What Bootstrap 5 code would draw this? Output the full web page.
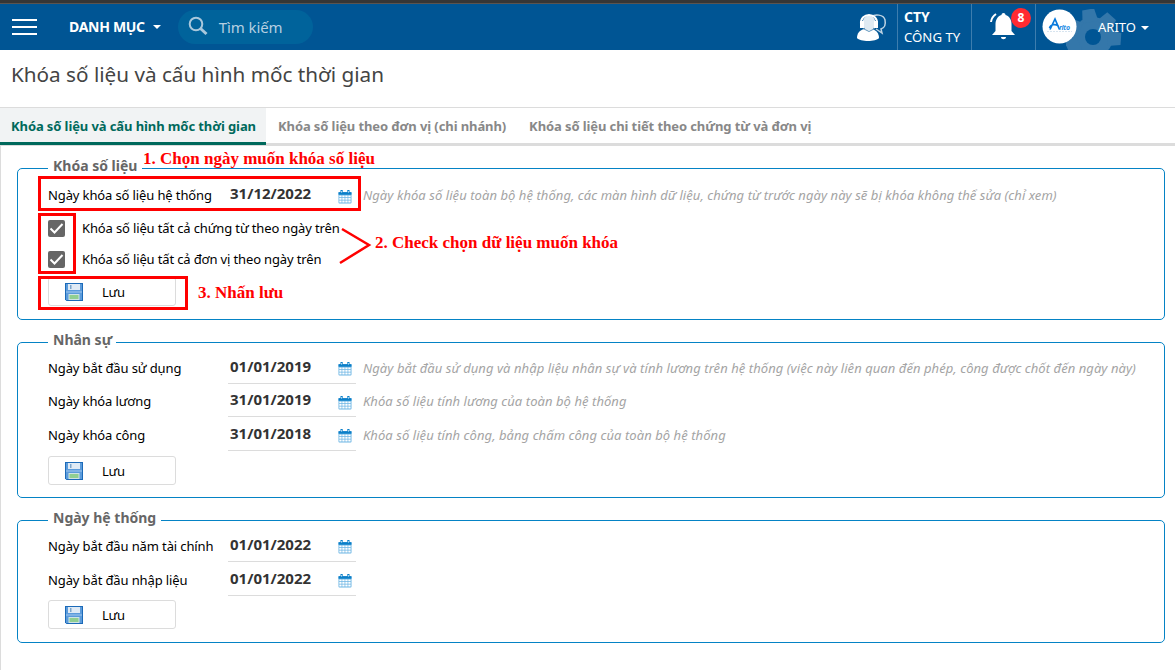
<!DOCTYPE html>
<html lang="vi">
<head>
<meta charset="utf-8">
<meta name="viewport" content="width=device-width, initial-scale=1">
<title>Khóa số liệu và cấu hình mốc thời gian</title>
<link rel="stylesheet" href="https://cdn.jsdelivr.net/npm/bootstrap@5.3.0/dist/css/bootstrap.min.css">
<style>
body{font-family:"Noto Sans","Open Sans",sans-serif;font-size:13px;line-height:18px;color:#000;height:670px;overflow:hidden;background:#fff}
.topbar{height:50px;background:#005594;border-top:3px solid #363636;color:#fff;box-shadow:inset 0 1px #5a5450}
.burger{width:25px;height:16px;border-top:2px solid #fff;border-bottom:2px solid #fff;margin-left:12px}
.burger i{display:block;height:2px;background:#fff;margin-top:5px}
.menu-name{font-weight:700;font-size:14px;letter-spacing:-.3px;margin-left:32px;padding-top:1px}
.caret{border:4px solid transparent;border-top-color:#fff;border-bottom:0}
.search{width:135px;height:34px;border-radius:17px;background:#00639b;color:#b5cfe1;font-size:15px;padding-left:10px;margin-left:17px}
.s-text{margin-left:10px;letter-spacing:-.1px}
.bar-cell{height:46px;border-left:1px solid #3d7dae;margin-top:1px}
.company{width:74px;font-size:14px;line-height:20px;padding:3px 0 0 6px}
.co{font-size:13.2px}
.bell{width:64px}
.count{left:39px;top:4px;width:20px;height:20px;border-radius:50%;background:#ff2a31;font-size:12px;line-height:20px;font-weight:700}
.account{width:140px;overflow:hidden}
.gear{left:30px;top:5px}
.user-name{left:62px;top:14px;font-size:13px}
.page-title{height:58px;border-bottom:1px solid #dcdcdc;font-size:20.7px;line-height:26px;color:#444;padding:11px 0 0 11px}
.tabs{height:38px;box-shadow:inset 0 -3px #dcdcdc;font-weight:700;color:#888;line-height:37px;letter-spacing:-.1px}
.tabs .on{width:266px;height:37px;background:#f1f3f4;color:#00695c;border-bottom:3px solid #00695c;padding-left:11px}
.t3{margin-left:23px}
.content-pane{border-left:1px solid #dcdcdc;height:524px;padding:14px 10px 0 16px}
fieldset.group{border:1px solid #0583c5;border-radius:5px;padding:0 0 0 30px;box-sizing:border-box}
.group legend{height:16px;line-height:11px;font-size:14px;font-weight:700;color:#666;padding-left:5px;white-space:nowrap}
.line{height:34px}
.line .cap{width:180px;white-space:nowrap;letter-spacing:-.12px;padding-top:1px}
.date{width:128px;border-bottom:1px solid #dcdcdc;font-weight:700;font-size:15px;color:#333;padding:0 4px 0 2px;height:100%}
.date span{margin-top:-2px}
.date svg{margin-top:5px}
.hint{font-style:italic;color:#a4a4a4;margin-left:7px;white-space:nowrap;letter-spacing:.065px;padding-top:1px}
.tick{width:17px;height:17px;border-radius:2px;background:#666}
.ck{margin-left:17px;letter-spacing:-.14px}
.save{width:128px;height:29px;border:1px solid #dcdcdc;border-radius:3px;background:#fff;padding:0 0 0 16px}
.save span{margin-left:19px;letter-spacing:-.3px}
.note{font:700 17px/20px "Liberation Serif",serif;color:#f00;white-space:nowrap}
.frame{border:3px solid #f00}
</style>
</head>
<body class="position-relative">
<svg width="0" height="0" class="position-absolute">
<symbol id="cal" viewBox="0 0 14 14"><rect x=".5" y="2" width="13" height="11.500" rx="1" fill="#6db5e4"/><path d="M.5 2.200h13v2.500H.5z" fill="#0b7fc8"/><path d="M2.500 0h2.200v3H2.500zM9.300 0h2.200v3H9.300z" fill="#0b7fc8"/><path d="M3.600 1v1.700M10.400 1v1.700" stroke="#e4f2fb" stroke-width=".8"/><path d="M1.300 5.500h2.300v1.700H1.300zM4.300 5.500h2.300v1.700H4.300zM7.300 5.500h2.300v1.700H7.300zM10.300 5.500h2.300v1.700h-2.300zM1.300 8h2.300v1.800H1.300zM4.300 8h2.300v1.800H4.300zM7.300 8h2.300v1.800H7.300zM10.300 8h2.300v1.800h-2.300zM1.300 10.600h2.300v1.800H1.300zM4.300 10.600h2.300v1.800H4.300zM7.300 10.600h2.300v1.800H7.300zM10.300 10.600h2.300v1.800h-2.300z" fill="#fff"/></symbol>
<symbol id="disk" viewBox="0 0 18 18"><path d="M0 0h18v18H1.500L0 16.500z" fill="#1c6ab8"/><path d="M1 1h16v16H1z" fill="#5b9bdb"/><path d="M3 1h12v6H3z" fill="#dfeaf5"/><path d="M5 2h1.500v4H5z" fill="#7ea6cc"/><path d="M1 8h16v2H1z" fill="#7fb2e5"/><path d="M3.500 11h11v6h-11z" fill="#cfe3e4"/><path d="M4.500 12h9v4h-9z" fill="#90cf91"/></symbol>
</svg>
<header class="topbar d-flex align-items-center">
 <div class="burger"><i></i></div>
 <div class="menu-name">DANH MỤC</div><span class="caret ms-2"></span>
 <div class="search d-flex align-items-center"><svg width="21" height="21" viewBox="0 0 21 21" fill="none" stroke="#a9c8dc"><circle cx="8" cy="8" r="6.300" stroke-width="2"/><path d="M12.500 12.500l6 5.500" stroke-width="3"/></svg><span class="s-text">Tìm kiếm</span></div>
 <svg class="ms-auto me-2" width="34" height="30" viewBox="0 0 34 30"><path d="M17 5c2-3 12-3 13 3 1 5-1 8-4 9l1 4-6-4" fill="none" stroke="#bdd3e3" stroke-width="1.500"/><path d="M2 26c0-5 3-8 7-9h8c4 1 7 4 7 9-3 4-19 4-22 0z" fill="#fff"/><ellipse cx="14" cy="11" rx="6.500" ry="7.500" fill="#dfeaf2"/><path d="M6 12c-1-12 17-12 16 0" fill="none" stroke="#fff" stroke-width="2"/><path d="M5 9h4v7H5zM19 9h4v7h-4z" fill="#fff"/><path d="M8 16.500l6 3 6-3" fill="none" stroke="#5f95bd"/></svg>
 <div class="bar-cell company"><b>CTY</b><br><span class="co">CÔNG TY</span></div>
 <div class="bar-cell bell position-relative"><svg class="position-absolute" style="left:17px;top:7px" width="28" height="30" viewBox="0 0 28 30"><path d="M14.500 2c1.500 0 2 1 2 2 4 1 6 5 6 9v7l3.500 4H3l3.500-4v-7c0-4 2-8 6-9 0-1 .5-2 2-2zM12 26h5c0 3-5 3-5 0z" fill="#fff"/><path d="M7 3C4 5 2.500 7 2 11" fill="none" stroke="#fff" stroke-width="2"/></svg><span class="count position-absolute text-center">8</span></div>
 <div class="bar-cell account position-relative">
  <svg class="gear position-absolute" width="56" height="44" viewBox="0 0 56 44"><g fill="#3477aa"><circle cx="27" cy="28" r="20"/><path id="t" d="M21 0h12l2 13H19z" transform="rotate(-10 27 28)"/><use href="#t" transform="rotate(52 27 28)"/><use href="#t" transform="rotate(104 27 28)"/><use href="#t" transform="rotate(-52 27 28)"/><use href="#t" transform="rotate(-104 27 28)"/></g><circle cx="27" cy="28" r="8" fill="#005594"/></svg>
  <svg class="position-absolute" style="left:6px;top:5px" width="35" height="35" viewBox="0 0 35 35"><circle cx="17.500" cy="17.500" r="17" fill="#fff"/><path d="M8 20.500L13 10l4.500 10.500M7.500 19c1-4 6-4 9-2" fill="none" stroke="#0878dc" stroke-width="1.700"/><text x="17" y="20.500" font-size="7" font-style="italic" font-weight="700" fill="#278de5" textLength="11">rito</text><path d="M5 22.500h25" stroke="#d7e4ef" stroke-dasharray="2 1"/></svg>
  <span class="user-name position-absolute">ARITO</span><span class="caret position-absolute" style="left:105px;top:22px"></span>
 </div>
</header>
<h1 class="page-title m-0 fw-normal"><span>Khóa số liệu và cấu hình mốc thời gian</span></h1>
<nav class="tabs d-flex"><div class="on">Khóa số liệu và cấu hình mốc thời gian</div><div class="ms-2 ps-1">Khóa số liệu theo đơn vị (chi nhánh)</div><div class="t3">Khóa số liệu chi tiết theo chứng từ và đơn vị</div></nav>
<main class="content-pane">
 <fieldset class="group" style="height:160px"><legend class="float-none m-0" style="width:94px"><span>Khóa số liệu</span></legend>
  <div class="line d-flex align-items-center" style="height:36px"><label class="cap">Ngày khóa số liệu hệ thống</label><div class="date border-0 d-flex align-items-center justify-content-between"><span>31/12/2022</span><svg width="14" height="14"><use href="#cal"/></svg></div><div class="hint">Ngày khóa số liệu toàn bộ hệ thống, các màn hình dữ liệu, chứng từ trước ngày này sẽ bị khóa không thể sửa (chỉ xem)</div></div>
  <div class="d-flex align-items-center" style="height:32px"><svg class="tick" viewBox="0 0 17 17"><path d="M2.500 8.500l4 4 8-8.500" fill="none" stroke="#fff" stroke-width="2"/></svg><span class="ck">Khóa số liệu tất cả chứng từ theo ngày trên</span></div>
  <div class="d-flex align-items-center" style="height:30px"><svg class="tick" viewBox="0 0 17 17"><path d="M2.500 8.500l4 4 8-8.500" fill="none" stroke="#fff" stroke-width="2"/></svg><span class="ck">Khóa số liệu tất cả đơn vị theo ngày trên</span></div>
  <button class="save d-flex align-items-center" style="margin-top:3px"><svg width="18" height="18"><use href="#disk"/></svg><span>Lưu</span></button>
 </fieldset>
 <fieldset class="group" style="height:164px;margin-top:14px"><legend class="float-none m-0" style="width:68px"><span>Nhân sự</span></legend>
  <div class="line d-flex align-items-center"><label class="cap">Ngày bắt đầu sử dụng</label><div class="date d-flex align-items-center justify-content-between"><span>01/01/2019</span><svg width="14" height="14"><use href="#cal"/></svg></div><div class="hint">Ngày bắt đầu sử dụng và nhập liệu nhân sự và tính lương trên hệ thống (việc này liên quan đến phép, công được chốt đến ngày này)</div></div>
  <div class="line d-flex align-items-center" style="height:33px"><label class="cap">Ngày khóa lương</label><div class="date d-flex align-items-center justify-content-between"><span>31/01/2019</span><svg width="14" height="14"><use href="#cal"/></svg></div><div class="hint">Khóa số liệu tính lương của toàn bộ hệ thống</div></div>
  <div class="line d-flex align-items-center"><label class="cap">Ngày khóa công</label><div class="date d-flex align-items-center justify-content-between"><span>31/01/2018</span><svg width="14" height="14"><use href="#cal"/></svg></div><div class="hint">Khóa số liệu tính công, bảng chấm công của toàn bộ hệ thống</div></div>
  <button class="save d-flex align-items-center" style="margin-top:5px"><svg width="18" height="18"><use href="#disk"/></svg><span>Lưu</span></button>
 </fieldset>
 <fieldset class="group" style="height:131px;margin-top:14px"><legend class="float-none m-0" style="width:113px"><span>Ngày hệ thống</span></legend>
  <div class="line d-flex align-items-center"><label class="cap">Ngày bắt đầu năm tài chính</label><div class="date d-flex align-items-center justify-content-between"><span>01/01/2022</span><svg width="14" height="14"><use href="#cal"/></svg></div></div>
  <div class="line d-flex align-items-center"><label class="cap">Ngày bắt đầu nhập liệu</label><div class="date d-flex align-items-center justify-content-between"><span>01/01/2022</span><svg width="14" height="14"><use href="#cal"/></svg></div></div>
  <button class="save d-flex align-items-center" style="margin-top:4px"><svg width="18" height="18"><use href="#disk"/></svg><span>Lưu</span></button>
 </fieldset>
</main>
<div class="frame position-absolute" style="left:38px;top:176px;width:323px;height:35px"></div>
<div class="frame position-absolute" style="left:38px;top:213px;width:38px;height:61px"></div>
<div class="frame position-absolute" style="left:38px;top:276px;width:150px;height:34px"></div>
<svg class="position-absolute" style="left:338px;top:226px" width="34" height="40"><path d="M4 3l27 16L2 37" fill="none" stroke="#f00" stroke-width="2.500"/></svg>
<div class="note position-absolute" style="left:143px;top:149px">1. Chọn ngày muốn khóa số liệu</div>
<div class="note position-absolute" style="left:375px;top:233px">2. Check chọn dữ liệu muốn khóa</div>
<div class="note position-absolute" style="left:198px;top:283px">3. Nhấn lưu</div>
<script src="https://cdn.jsdelivr.net/npm/bootstrap@5.3.0/dist/js/bootstrap.bundle.min.js"></script>
</body>
</html>
